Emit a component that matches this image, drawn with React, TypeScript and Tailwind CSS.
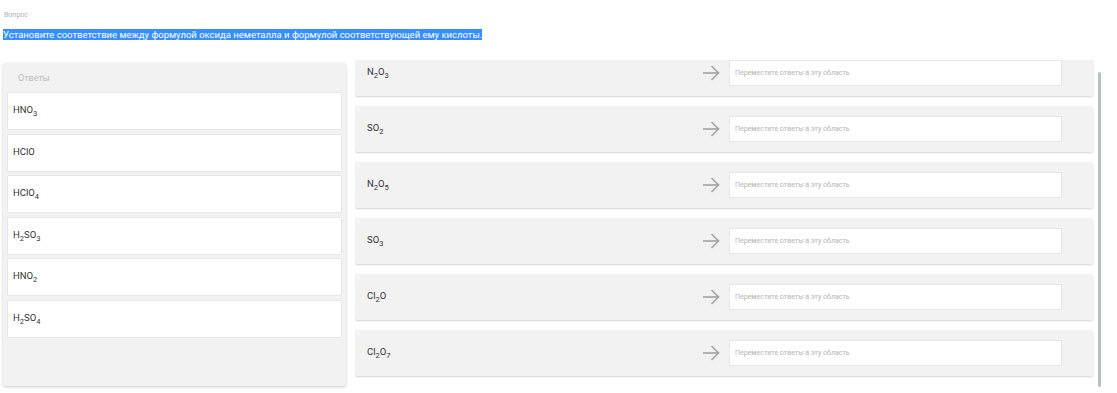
import type { ReactNode } from "react";

type Formula = { id: string; parts: [string, string?][] };

// each part: [text, subscript]
const answers: Formula[] = [
  { id: "a1", parts: [["HNO", "3"]] },
  { id: "a2", parts: [["HClO"]] },
  { id: "a3", parts: [["HClO", "4"]] },
  { id: "a4", parts: [["H", "2"], ["SO", "3"]] },
  { id: "a5", parts: [["HNO", "2"]] },
  { id: "a6", parts: [["H", "2"], ["SO", "4"]] },
];

const oxides: Formula[] = [
  { id: "o1", parts: [["N", "2"], ["O", "3"]] },
  { id: "o2", parts: [["SO", "2"]] },
  { id: "o3", parts: [["N", "2"], ["O", "5"]] },
  { id: "o4", parts: [["SO", "3"]] },
  { id: "o5", parts: [["Cl", "2"], ["O"]] },
  { id: "o6", parts: [["Cl", "2"], ["O", "7"]] },
];

function Chem({ f }: { f: Formula }) {
  return (
    <span className="leading-none">
      {f.parts.map(([t, sub], i) => (
        <span key={i}>
          {t}
          {sub && <span className="relative top-[3px] text-[7.5px]">{sub}</span>}
        </span>
      ))}
    </span>
  );
}

function Arrow() {
  return (
    <svg width="18" height="16" viewBox="0 0 18 16" fill="none" stroke="#a3a3a3" strokeWidth="1.6">
      <path d="M1 8h15.5" />
      <path d="M9.5 1l7 7-7 7" />
    </svg>
  );
}

function Card({ children }: { children: ReactNode }) {
  return (
    <div className="flex h-[46px] shrink-0 items-center rounded-[2px] bg-[#f2f2f2] pl-[12px] pr-[31px] shadow-[0_1px_2px_rgba(0,0,0,0.18)]">
      {children}
    </div>
  );
}

export default function App() {
  return (
    <div className="h-[393px] w-[1117px] overflow-hidden bg-white font-['Roboto',sans-serif]">
      <div className="h-[26px] pl-[4px] pt-[10px] text-[7px] leading-[10px] text-[#b0b0b0]">Вопрос</div>
      <div className="pl-[3px] leading-[13px]">
        <span className="bg-[#3390ff] text-[9.5px] leading-[13px] text-white">
          Установите соответствие между формулой оксида неметалла и формулой соответствующей ему кислоты.
        </span>
      </div>

      <div className="mt-[19px] flex">
        <div className="ml-[3px] mt-[3px] flex h-[323px] w-[343px] flex-col rounded-[2px] bg-[#f2f2f2] px-[5px] shadow-[0_1px_3px_rgba(0,0,0,0.2)]">
          <div className="flex h-[30px] items-center pl-[10px] pt-[2px] text-[9px] text-[#bdbdbd]">Ответы</div>
          <div className="flex flex-col gap-[5.5px]">
            {answers.map((a) => (
              <div
                key={a.id}
                className="flex h-[36px] items-center bg-white pl-[5px] pb-[2px] text-[9.5px] text-[#333] shadow-[0_0_1px_rgba(0,0,0,0.25)]"
              >
                <Chem f={a} />
              </div>
            ))}
          </div>
        </div>

        <div className="relative ml-[9px] h-[335px] w-[762px] overflow-hidden">
          <div className="-mt-[10px] flex w-[738px] flex-col gap-[10px] pb-[4px]">
            {oxides.map((o) => (
              <Card key={o.id}>
                <div className="flex-1 pb-[2px] text-[9.5px] text-[#333]">
                  <Chem f={o} />
                </div>
                <Arrow />
                <div className="ml-[9px] flex h-[26px] w-[333px] items-center border border-[#e6e6e6] bg-white pl-[5px] text-[7px] text-[#b5b5b5]">
                  Переместите ответы в эту область
                </div>
              </Card>
            ))}
          </div>
          <div className="absolute left-[743px] top-[12px] h-[315px] w-[3px] rounded-full bg-[#b4c2c4]" />
        </div>
      </div>
    </div>
  );
}
